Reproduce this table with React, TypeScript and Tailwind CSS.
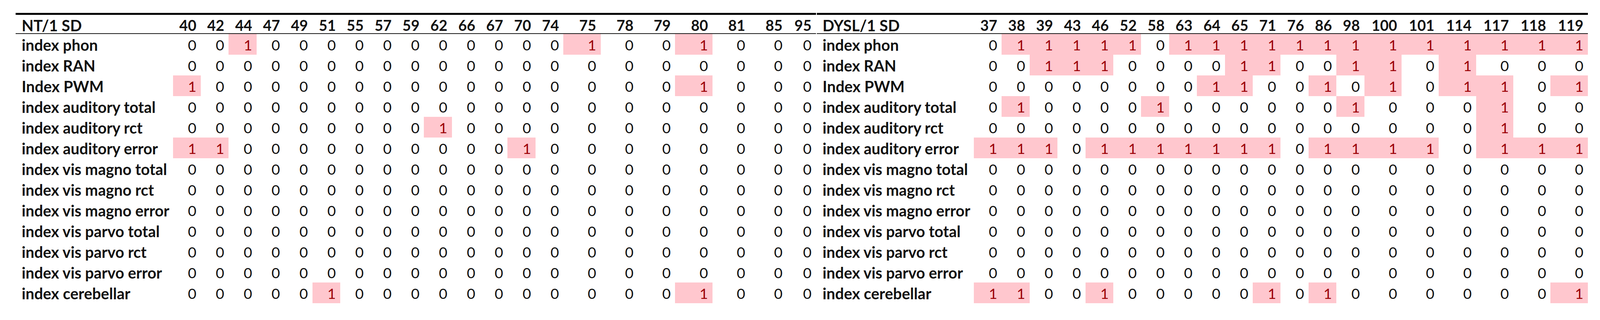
import React from 'react';

type Row = { label: string; ones: string[] };

const NT_COLS = ['40', '42', '44', '47', '49', '51', '55', '57', '59', '62', '66', '67', '70', '74', '75', '78', '79', '80', '81', '85', '95'];
const DYSL_COLS = ['37', '38', '39', '43', '46', '52', '58', '63', '64', '65', '71', '76', '86', '98', '100', '101', '114', '117', '118', '119'];

// widths in vw, heights in vh, so the sheet spans the window like the screenshot
// label, 14 narrow, 6 wide (+ one more narrow on the NT side)
const NT_GRID = 'grid-cols-[9.819vw_repeat(14,1.7435vw)_repeat(6,2.3285vw)_1.8123vw]';
const DYSL_GRID = 'grid-cols-[9.819vw_repeat(14,1.7435vw)_repeat(6,2.3285vw)]';

const LABELS = [
  'index phon',
  'index RAN',
  'Index PWM',
  'index auditory total',
  'index auditory rct',
  'index auditory error',
  'index vis magno total',
  'index vis magno rct',
  'index vis magno error',
  'index vis parvo total',
  'index vis parvo rct',
  'index vis parvo error',
  'index cerebellar',
];

const NT_ONES: string[][] = [
  ['44', '75', '80'],
  [],
  ['40', '80'],
  [],
  ['62'],
  ['40', '42', '70'],
  [],
  [],
  [],
  [],
  [],
  [],
  ['51', '80'],
];

const allBut = (cols: string[], skip: string[]) => cols.filter((c) => !skip.includes(c));

const DYSL_ONES: string[][] = [
  allBut(DYSL_COLS, ['37', '58']),
  ['39', '43', '46', '65', '71', '98', '100', '114'],
  ['64', '65', '86', '100', '114', '117', '119'],
  ['38', '58', '98', '117'],
  ['117'],
  allBut(DYSL_COLS, ['43', '76', '114']),
  [],
  [],
  [],
  [],
  [],
  [],
  ['37', '38', '46', '71', '86', '119'],
];

const toRows = (ones: string[][]): Row[] => LABELS.map((label, i) => ({ label, ones: ones[i] }));

interface SdTableProps {
  title: string;
  cols: string[];
  rows: Row[];
  grid: string;
}

const SdTable = ({ title, cols, rows, grid }: SdTableProps) => {
  return (
    <div className="shrink-0 border-t-[5px] border-black">
      <div className={`grid ${grid} h-[5.983vh] items-end border-b-2 border-[#1a1a1a] font-bold leading-[4.884vh]`}>
        <div className="min-w-0 whitespace-nowrap pl-[0.367vw] text-[0.9635vw]">{title}</div>
        {cols.map((c) => (
          <div key={c} className="min-w-0 pr-[0.275vw] text-right">
            {c}
          </div>
        ))}
      </div>

      {rows.map((row) => (
        <div key={row.label} className={`grid ${grid} h-[6.471vh]`}>
          <div className="min-w-0 whitespace-nowrap pl-[0.367vw] pt-[0.244vh] text-[0.9635vw] font-bold leading-[6.227vh]">
            {row.label}
          </div>
          {cols.map((c) => {
            const on = row.ones.includes(c);
            return (
              <div
                key={c}
                className={`min-w-0 pr-[0.275vw] pt-[0.244vh] text-right leading-[6.227vh] ${on ? 'bg-[#ffc7ce] text-[#9c0006]' : ''}`}
              >
                {on ? 1 : 0}
              </div>
            );
          })}
        </div>
      ))}
    </div>
  );
};

export default function App() {
  return (
    <div className="flex min-h-screen gap-[2px] bg-white pl-[0.986vw] pt-[4.029vh] font-['Lato',sans-serif] text-[0.918vw] text-[#111]">
      <SdTable title="NT/1 SD" cols={NT_COLS} rows={toRows(NT_ONES)} grid={NT_GRID} />
      <SdTable title="DYSL/1 SD" cols={DYSL_COLS} rows={toRows(DYSL_ONES)} grid={DYSL_GRID} />
    </div>
  );
}
